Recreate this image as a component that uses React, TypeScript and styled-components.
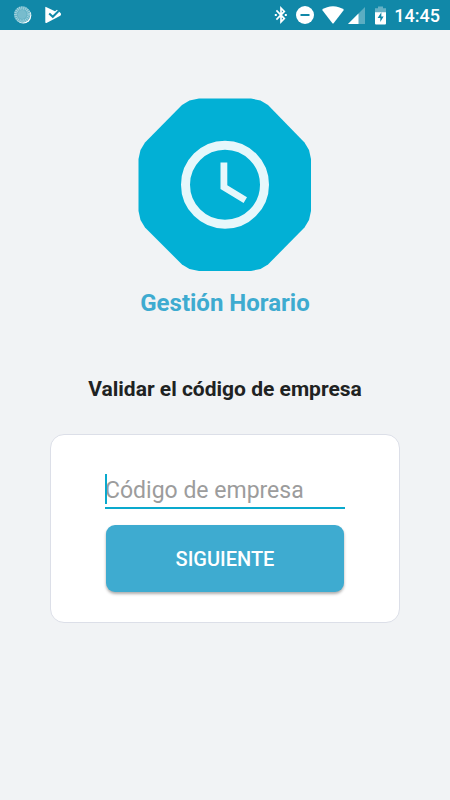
import React, { useState } from "react";
import styled, { createGlobalStyle } from "styled-components";

const GlobalStyle = createGlobalStyle`
  * { box-sizing: border-box; }
  body {
    margin: 0;
    background: #f1f3f5;
    font-family: Roboto, "Liberation Sans", sans-serif;
  }
`;

const Screen = styled.div`
  min-height: 100vh;
  background: #f1f3f5;
`;

const StatusBar = styled.header`
  display: flex;
  align-items: center;
  justify-content: space-between;
  height: 30px;
  padding: 0 10px 0 13px;
  background: #1188a8;
  color: #ffffff;
`;

const StatusGroup = styled.div<{ $gap: number }>`
  display: flex;
  align-items: center;
  gap: ${(p) => p.$gap}px;

  svg { display: block; }
`;

const Time = styled.time`
  margin-top: 2px;
  font-size: 18px;
  line-height: 30px;
  font-weight: 500;
`;

const Content = styled.main`
  display: flex;
  flex-direction: column;
  align-items: center;
  padding: 68px 50px 40px;
`;

const Logo = styled.svg`
  display: block;
  width: 174px;
  height: 174px;
`;

const AppName = styled.h1`
  margin: 16px 0 0;
  color: #3eabd0;
  font-size: 24px;
  line-height: 30px;
  font-weight: 700;
`;

const Heading = styled.h2`
  margin: 57px 0 0;
  color: #202222;
  font-size: 21px;
  line-height: 28px;
  font-weight: 700;
`;

const Card = styled.form`
  display: flex;
  flex-direction: column;
  align-self: stretch;
  margin-top: 31px;
  padding: 38px 54px 30px;
  border: 1px solid #dcdfe8;
  border-radius: 14px;
  background: #ffffff;
`;

const Field = styled.label`
  position: relative;
  display: block;
`;

const Caret = styled.span`
  position: absolute;
  top: 1px;
  left: 0;
  width: 2px;
  height: 30px;
  background: #0aa9cd;
`;

const CodeInput = styled.input`
  display: block;
  width: 100%;
  height: 36px;
  padding: 1px 0 0;
  border: 0;
  border-bottom: 2px solid #0aa9cd;
  border-radius: 0;
  outline: 0;
  background: transparent;
  caret-color: #0aa9cd;
  color: #202222;
  font: 400 23px/32px Roboto, "Liberation Sans", sans-serif;

  &::placeholder { color: #9c9c9c; opacity: 1; }
`;

const NextButton = styled.button`
  height: 67px;
  margin: 16px 1px 0;
  border: 0;
  border-radius: 9px;
  background: #3eabd0;
  box-shadow: 0 2px 3px rgba(0, 0, 0, 0.32);
  color: #ffffff;
  font: 500 20px/24px Roboto, "Liberation Sans", sans-serif;
`;

const SyncIcon = () => (
  <svg width="20" height="20" viewBox="0 0 20 20" aria-hidden="true">
    <circle cx="10.3" cy="10.6" r="8" fill="#ffffff" />
    <circle cx="9.2" cy="9.5" r="8.2" fill="#62b1c5" />
    <circle cx="9.2" cy="9.5" r="6.6" fill="none" stroke="#a5d3de" strokeWidth="3" strokeDasharray="1 1" />
    <circle cx="9.2" cy="9.5" r="4.4" fill="#78bccd" />
  </svg>
);

const PlayCheckIcon = () => (
  <svg width="18" height="18" viewBox="0 0 18 18" aria-hidden="true">
    <path d="M.3 1.2Q.3.5 1 .9L10 5.2L12 3.8L15.8 7.2Q16.6 8.7 15.3 9.8L1.5 16.9Q.3 17.2.3 16.2Z" fill="#ffffff" />
    <path d="M4.2 7.4L7.8 10.8L13.6 5" fill="none" stroke="#1188a8" strokeWidth="2" />
  </svg>
);

const BluetoothIcon = () => (
  <svg width="14" height="20" viewBox="0 0 14 20" aria-hidden="true">
    <path d="M2.4 5.4L10.3 13.6L7 16.9V3.1L10.3 6.4L2.4 14.6" fill="none" stroke="#ffffff" strokeWidth="1.7" />
    <path d="M.8 9.1h2v2h-2zM10.8 9.1h2v2h-2z" fill="#ffffff" />
  </svg>
);

const DoNotDisturbIcon = () => (
  <svg width="18" height="18" viewBox="0 0 18 18" aria-hidden="true">
    <circle cx="9" cy="9" r="9" fill="#ffffff" />
    <path d="M4.5 9h9" stroke="#1188a8" strokeWidth="2" />
  </svg>
);

const WifiIcon = () => (
  <svg width="22" height="18" viewBox="0 0 22 18" aria-hidden="true">
    <path d="M0 3.8Q4.8.3 11 .3T22 3.8L11.8 17Q11 18 10.2 17Z" fill="#ffffff" />
  </svg>
);

const SignalIcon = () => (
  <svg width="17" height="17" viewBox="0 0 17 17" aria-hidden="true">
    <path d="M0 17L17 0V17Z" fill="#5badc2" />
    <path d="M0 17L10.5 6.5V17Z" fill="#ffffff" />
  </svg>
);

const BatteryIcon = () => (
  <svg width="11" height="19" viewBox="0 0 11 19" aria-hidden="true">
    <path d="M0 2.2h3V.4h5v1.8h3V7H0Z" fill="#66b1c5" />
    <path d="M0 6.2h11V17.5Q11 18.6 10 18.6H1Q0 18.6 0 17.5Z" fill="#ffffff" />
    <path d="M6.4 6.2L2.6 11.9h2.7v4L8.6 10.4H6.3Z" fill="#1188a8" />
  </svg>
);

const ClockLogo = () => (
  <Logo viewBox="0 0 174 174" role="img" aria-label="Gestión Horario">
    <path
      d="M61 0.5H113L122.5 2.5L130 7L166.5 44.5L171 52L173 61V113L171 122L166.5 129.5L130 166.5L122.5 171L113 173H61L51.5 171L44 166.5L7 129.5L2.5 122L0.5 113V61L2.5 52L7 44.5L44 7L51.5 2.5Z"
      fill="#02b0d5"
    />
    <circle cx="87" cy="86.7" r="39.5" fill="none" stroke="#e6f7fb" strokeWidth="9" />
    <path d="M82.5 64.5H89.3V87.3L109 99.2L105.6 105L82.5 91Z" fill="#e6f7fb" />
  </Logo>
);

export default function App() {
  const [code, setCode] = useState("");

  return (
    <Screen>
      <GlobalStyle />
      <StatusBar>
        <StatusGroup $gap={12}>
          <SyncIcon />
          <PlayCheckIcon />
        </StatusGroup>
        <StatusGroup $gap={8}>
          <StatusGroup $gap={10}>
            <StatusGroup $gap={8}>
              <BluetoothIcon />
              <DoNotDisturbIcon />
              <StatusGroup $gap={4}>
                <WifiIcon />
                <SignalIcon />
              </StatusGroup>
            </StatusGroup>
            <BatteryIcon />
          </StatusGroup>
          <Time>14:45</Time>
        </StatusGroup>
      </StatusBar>
      <Content>
        <ClockLogo />
        <AppName>Gestión Horario</AppName>
        <Heading>Validar el código de empresa</Heading>
        <Card onSubmit={(event: React.FormEvent) => event.preventDefault()}>
          <Field>
            <CodeInput
              type="text"
              aria-label="Código de empresa"
              placeholder="Código de empresa"
              value={code}
              onChange={(event) => setCode(event.target.value)}
            />
            {code === "" && <Caret />}
          </Field>
          <NextButton type="submit">SIGUIENTE</NextButton>
        </Card>
      </Content>
    </Screen>
  );
}
